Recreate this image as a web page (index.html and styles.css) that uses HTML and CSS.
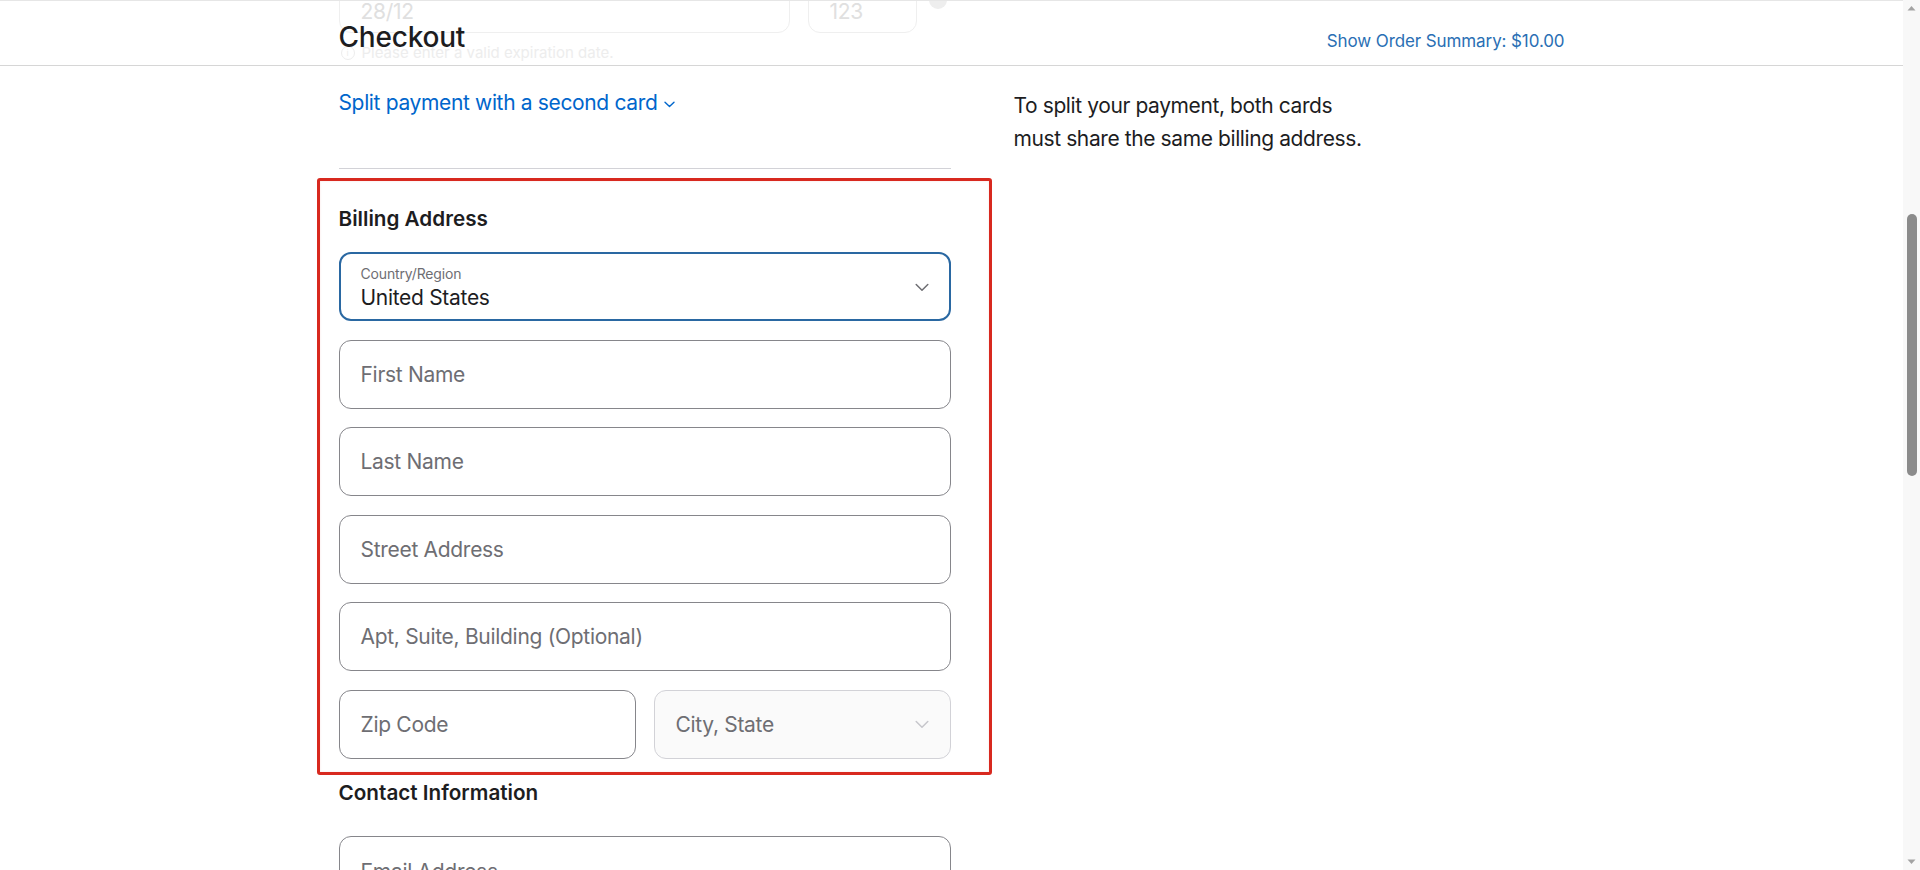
FILE: index.html
```html
<!DOCTYPE html>
<html lang="en">
<head>
<meta charset="utf-8">
<title>Checkout</title>
<link rel="stylesheet" href="styles.css">
</head>
<body>
<div class="screen">
  <div class="page">
    <header class="topbar">
      <div class="ghost" aria-hidden="true">
        <div class="wrap">
          <div class="ghost-col">
            <div class="ghost-row">
              <div class="ghost-box exp">28/12</div>
              <div class="ghost-box cvv">123</div>
              <div class="ghost-dot"></div>
            </div>
            <div class="ghost-error"><span class="ghost-i">i</span>Please enter a valid expiration date.</div>
          </div>
        </div>
      </div>
      <div class="wrap bar">
        <h1 class="title">Checkout</h1>
        <a class="summary">Show Order Summary: $10.00</a>
      </div>
    </header>

    <main class="wrap content">
      <div class="form">
        <a class="split-link">Split payment with a second card<svg class="split-chev" width="11" height="7" viewBox="0 0 11 7"><path d="M1 1.2l4.5 4.3 4.5-4.3" fill="none" stroke="#0066cc" stroke-width="1.4" stroke-linecap="round" stroke-linejoin="round"/></svg></a>
        <div class="divider"></div>

        <section class="billing">
          <h2 class="section-title">Billing Address</h2>
          <div class="fields">
            <div class="field select focused">
              <div class="select-text">
                <span class="select-label">Country/Region</span>
                <span class="select-value">United States</span>
              </div>
              <svg class="chev" width="14" height="9" viewBox="0 0 14 9"><path d="M1.2 1.5l5.8 5.8 5.8-5.8" fill="none" stroke="#6e6e73" stroke-width="1.5" stroke-linecap="round" stroke-linejoin="round"/></svg>
            </div>
            <div class="field"><span class="ph">First Name</span></div>
            <div class="field"><span class="ph">Last Name</span></div>
            <div class="field"><span class="ph">Street Address</span></div>
            <div class="field"><span class="ph">Apt, Suite, Building (Optional)</span></div>
            <div class="field-row">
              <div class="field"><span class="ph">Zip Code</span></div>
              <div class="field disabled">
                <span class="ph">City, State</span>
                <svg class="chev" width="14" height="9" viewBox="0 0 14 9"><path d="M1.2 1.5l5.8 5.8 5.8-5.8" fill="none" stroke="#c7c7cc" stroke-width="1.5" stroke-linecap="round" stroke-linejoin="round"/></svg>
              </div>
            </div>
          </div>
        </section>

        <section class="contact">
          <h2 class="section-title">Contact Information</h2>
          <div class="field email"><span class="ph">Email Address</span></div>
        </section>
      </div>

      <aside class="aside">
        <p class="note">To split your payment, both cards must share the same billing address.</p>
      </aside>
    </main>
  </div>

  <div class="scrollbar" aria-hidden="true">
    <div class="sb-btn"><svg width="17" height="17" viewBox="0 0 17 17"><polygon points="4.5,10.5 12.5,10.5 8.5,6" fill="#a3a3a3"/></svg></div>
    <div class="sb-track"><div class="sb-thumb"></div></div>
    <div class="sb-btn"><svg width="17" height="17" viewBox="0 0 17 17"><polygon points="4.5,6.5 12.5,6.5 8.5,11" fill="#a3a3a3"/></svg></div>
  </div>
</div>
</body>
</html>
```

FILE: styles.css
```css
* { box-sizing: border-box; }

html, body {
  margin: 0;
  padding: 0;
  background: #ffffff;
}

body {
  font-family: Inter, "Noto Sans", "Liberation Sans", sans-serif;
  color: #1d1d1f;
  -webkit-font-smoothing: antialiased;
}

.screen {
  display: flex;
  width: 1920px;
  height: 870px;
  overflow: hidden;
}

.page {
  flex: 1;
  min-width: 0;
  display: flex;
  flex-direction: column;
  overflow: hidden;
  border-top: 1px solid #e6e6e6;
}

.wrap {
  width: 1226px;
  margin: 0 auto;
}

/* ---------- header ---------- */
.topbar {
  position: relative;
  height: 66px;
  flex: none;
  border-bottom: 1px solid #d6d6d6;
  margin-top: -1px;
}

.ghost {
  position: absolute;
  inset: 0;
  overflow: hidden;
}

.ghost-col {
  width: 612px;
}

.ghost-row {
  display: flex;
  gap: 18px;
  margin-top: -36px;
}

.ghost-box {
  height: 69px;
  border: 1px solid #efefef;
  border-radius: 12px;
  padding: 0 21px 8px;
  display: flex;
  align-items: flex-end;
  font-size: 21px;
  line-height: 25px;
  letter-spacing: -0.3px;
  color: #e0e0e0;
}

.ghost-box.exp { width: 451px; }
.ghost-box.cvv { width: 109px; }

.ghost-dot {
  width: 18px;
  height: 18px;
  border-radius: 50%;
  background: #eeeeee;
  margin-top: 27px;
  margin-left: -6px;
}

.ghost-error {
  margin-top: 10px;
  font-size: 15px;
  line-height: 20px;
  color: #ededed;
  display: flex;
  align-items: center;
}

.ghost-i {
  width: 14px;
  height: 14px;
  border: 1px solid #ededed;
  border-radius: 50%;
  font-size: 9px;
  line-height: 12px;
  text-align: center;
  margin: 0 7px 0 2px;
}

.bar {
  position: relative;
  display: flex;
  justify-content: space-between;
  align-items: baseline;
  padding-top: 23px;
}

.title {
  margin: 0;
  font-size: 28px;
  line-height: 28px;
  font-weight: 500;
  letter-spacing: -0.2px;
  color: #1d1d1f;
}

.summary {
  font-size: 17px;
  line-height: 20px;
  letter-spacing: -0.1px;
  color: #2a6fb4;
  cursor: pointer;
}

/* ---------- content ---------- */
.content {
  display: flex;
  align-items: flex-start;
}

.form {
  width: 612px;
  flex: none;
}

.split-link {
  display: inline-flex;
  align-items: center;
  margin-top: 22px;
  font-size: 21px;
  line-height: 29px;
  letter-spacing: -0.35px;
  color: #0066cc;
  cursor: pointer;
}

.split-chev {
  margin-left: 7px;
  margin-top: 3px;
}

.divider {
  height: 1px;
  background: #d2d2d7;
  margin-top: 51px;
}

.billing {
  position: relative;
  margin-top: 38px;
}

/* review annotation drawn over the billing section */
.billing::before {
  content: "";
  position: absolute;
  top: -29px;
  left: -22px;
  right: -41px;
  bottom: -16px;
  border: 3px solid #d8291f;
  border-radius: 3px;
  box-shadow: inset 0 0 2px rgba(217, 40, 30, 0.15);
  pointer-events: none;
}

.section-title {
  margin: 0;
  font-size: 20.7px;
  line-height: 24px;
  font-weight: 600;
  color: #1d1d1f;
}

.fields {
  margin-top: 21px;
  display: flex;
  flex-direction: column;
  gap: 18.5px;
}

.field {
  height: 69px;
  border: 1px solid #86868b;
  border-radius: 12px;
  padding: 0 21px;
  display: flex;
  align-items: center;
  justify-content: space-between;
  background: #ffffff;
}

.ph {
  font-size: 21px;
  line-height: 25px;
  letter-spacing: -0.3px;
  color: #6e6e73;
}

.field.select {
  border: 2px solid #2a68a2;
  padding: 12px 20px 0 20px;
  align-items: flex-start;
}

.select-text {
  display: flex;
  flex-direction: column;
}

.select-label {
  font-size: 14px;
  line-height: 16px;
  letter-spacing: -0.15px;
  color: #6e6e73;
}

.select-value {
  margin-top: 3px;
  font-size: 21px;
  line-height: 26px;
  letter-spacing: -0.3px;
  color: #1d1d1f;
}

.field.select .chev {
  align-self: center;
  margin-top: -11px;
}

.field-row {
  display: grid;
  grid-template-columns: 1fr 1fr;
  gap: 18px;
}

.field.disabled {
  background: #fafafa;
  border-color: #d2d2d7;
  padding-right: 21px;
}

.contact {
  margin-top: 22px;
}

.field.email {
  margin-top: 31.5px;
  align-items: flex-start;
  padding-top: 22px;
}

.aside {
  margin-left: 63px;
  width: 370px;
}

.note {
  margin: 23px 0 0;
  font-size: 21px;
  line-height: 33px;
  letter-spacing: -0.4px;
  color: #1d1d1f;
}

/* ---------- fake classic scrollbar ---------- */
.scrollbar {
  width: 17px;
  flex: none;
  background: #f8f8f8;
  display: flex;
  flex-direction: column;
}

.sb-btn {
  height: 17px;
  flex: none;
}

.sb-btn svg { display: block; }

.sb-track {
  flex: 1;
  display: flex;
  flex-direction: column;
  align-items: center;
}

.sb-thumb {
  margin-top: 197px;
  width: 10px;
  height: 262px;
  border-radius: 5px;
  background: #8b8b8b;
}
```
